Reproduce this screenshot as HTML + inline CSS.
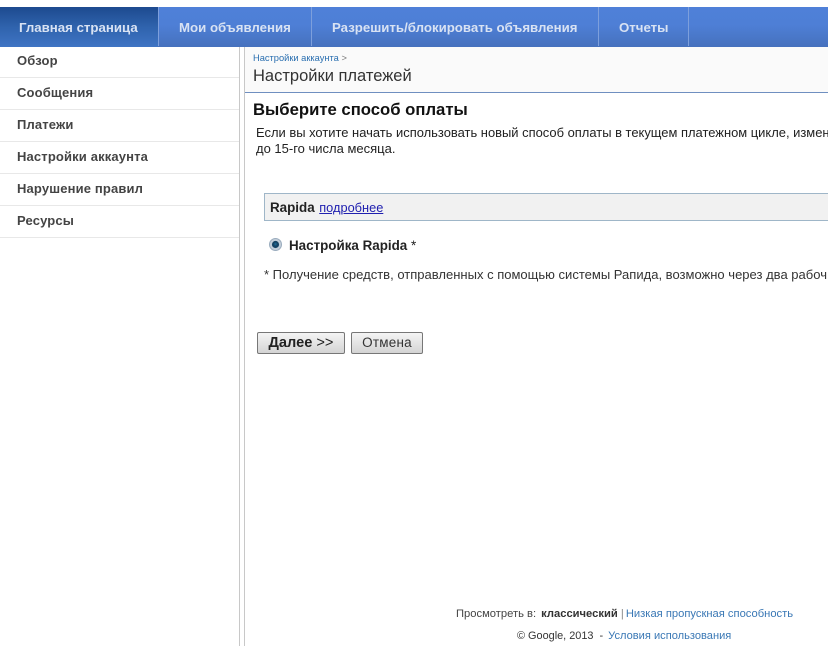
<!DOCTYPE html>
<html lang="ru">
<head>
<meta charset="utf-8">
<style>
html,body{margin:0;padding:0;background:#fff;}
body{width:828px;height:653px;position:relative;overflow:hidden;font-family:"Liberation Sans",Arial,sans-serif;color:#222;}
.a{position:absolute;white-space:nowrap;}
.clip{overflow:hidden;}
#bar{left:0;top:7px;width:828px;height:40px;background:linear-gradient(#4f80d8 0%,#4e7fd6 45%,#4671bd 100%);}
#act{left:0;top:7px;width:158px;height:40px;background:linear-gradient(#1d4a8f 0%,#2f63ad 50%,#3f74c4 100%);}
.sep{top:7px;width:1px;height:39px;background:#7d9fdc;}
.tab{top:20px;font-size:13.25px;font-weight:bold;color:#d8e2f3;line-height:16px;}
.side{left:17px;font-size:13px;font-weight:bold;color:#444;line-height:16px;letter-spacing:.15px;}
.hr{left:0;width:239px;height:1px;background:#e8e8e8;}
a{color:#3a78b5;text-decoration:none;}
</style>
</head>
<body>
<div class="a" id="bar"></div>
<div class="a" id="act"></div>
<div class="a sep" style="left:158px"></div>
<div class="a sep" style="left:311px"></div>
<div class="a sep" style="left:598px"></div>
<div class="a sep" style="left:688px"></div>
<div class="a tab" style="left:19px">Главная страница</div>
<div class="a tab" style="left:179px">Мои объявления</div>
<div class="a tab" style="left:332px">Разрешить/блокировать объявления</div>
<div class="a tab" style="left:619px">Отчеты</div>

<div class="a side" style="top:53px">Обзор</div>
<div class="a hr" style="top:77px"></div>
<div class="a side" style="top:85px">Сообщения</div>
<div class="a hr" style="top:109px"></div>
<div class="a side" style="top:117px">Платежи</div>
<div class="a hr" style="top:141px"></div>
<div class="a side" style="top:149px">Настройки аккаунта</div>
<div class="a hr" style="top:173px"></div>
<div class="a side" style="top:181px">Нарушение правил</div>
<div class="a hr" style="top:205px"></div>
<div class="a side" style="top:213px">Ресурсы</div>
<div class="a hr" style="top:237px"></div>

<div class="a" style="left:239px;top:47px;width:1px;height:599px;background:#c8c8c8"></div>
<div class="a" style="left:244px;top:47px;width:1px;height:599px;background:#c8c8c8"></div>

<div class="a" style="left:245px;top:47px;width:583px;height:45px;background:#fafafa"></div>
<div class="a" style="left:245px;top:92px;width:583px;height:1px;background:#6f8fc0"></div>
<div class="a" style="left:253px;top:52px;font-size:9.3px;line-height:12px;color:#2a6fb0">Настройки аккаунта <span style="color:#777">&gt;</span></div>
<div class="a" style="left:253px;top:67px;font-size:16.5px;line-height:18px;color:#333">Настройки платежей</div>

<div class="a" style="left:253px;top:100px;font-size:16.7px;font-weight:bold;line-height:19px;color:#111">Выберите способ оплаты</div>
<div class="a clip" style="left:256px;top:125px;width:572px;font-size:12.95px;line-height:16px;color:#222">Если вы хотите начать использовать новый способ оплаты в текущем платежном цикле, измен</div>
<div class="a" style="left:256px;top:141px;font-size:13px;line-height:16px;color:#222">до 15-го числа месяца.</div>

<div class="a" style="left:264px;top:193px;width:563px;height:26px;background:#f1f1f1;border:1px solid #9fb6c8;border-right:0"></div>
<div class="a" style="left:270px;top:200px;font-size:12.8px;line-height:16px;color:#222"><b style="font-size:13.4px">Rapida</b> <span style="color:#2020b0;text-decoration:underline;margin-left:1px">подробнее</span></div>

<svg class="a" style="left:269px;top:238px" width="13" height="13" viewBox="0 0 13 13">
<defs><radialGradient id="r" cx="50%" cy="45%" r="55%"><stop offset="0" stop-color="#1f6f9f"/><stop offset=".55" stop-color="#12405f"/><stop offset="1" stop-color="#1a4a70"/></radialGradient></defs>
<circle cx="6.5" cy="6.5" r="6" fill="#c3ced9" stroke="#9aacbe" stroke-width="1"/>
<circle cx="6.5" cy="6.5" r="3.6" fill="url(#r)"/>
</svg>
<div class="a" style="left:289px;top:238px;font-size:13.4px;line-height:16px;color:#222"><b>Настройка Rapida</b> *</div>
<div class="a clip" style="left:264px;top:267px;width:564px;font-size:13.02px;line-height:16px;color:#333">* Получение средств, отправленных с помощью системы Рапида, возможно через два рабоч</div>

<div class="a" style="left:257px;top:332px;width:86px;height:20px;border:1px solid #777;border-radius:2px;background:linear-gradient(#f4f4f4,#d4d4d4);text-align:center;font-size:14.6px;line-height:20px;color:#222"><b>Далее</b> &gt;&gt;</div>
<div class="a" style="left:351px;top:332px;width:70px;height:20px;border:1px solid #777;border-radius:2px;background:linear-gradient(#f4f4f4,#d4d4d4);text-align:center;font-size:13.5px;line-height:20px;color:#333;letter-spacing:.2px">Отмена</div>

<div class="a" style="left:456px;top:607px;font-size:11.2px;line-height:14px;color:#444">Просмотреть в: <b style="color:#333;margin-left:2px">классический</b> <span style="color:#888">|</span> <a style="margin-left:-1px">Низкая пропускная способность</a></div>
<div class="a" style="left:517px;top:629px;font-size:10.9px;line-height:14px;color:#333">© Google, 2013 &nbsp;- <a style="margin-left:2px;font-size:11.1px">Условия использования</a></div>
</body>
</html>
